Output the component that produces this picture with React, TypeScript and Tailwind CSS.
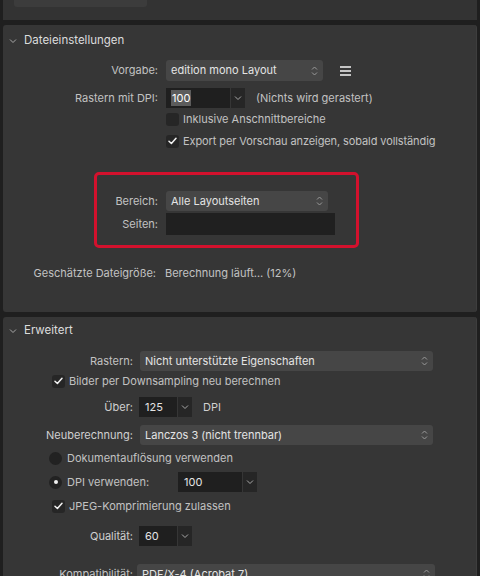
import React from 'react';

const font = { fontFamily: 'Inter, "Liberation Sans", sans-serif' };

function Chevron() {
  return (
    <svg width="8" height="6" viewBox="0 0 8 6" className="shrink-0">
      <path d="M1 1.5 L4 4.5 L7 1.5" fill="none" stroke="#a8a8a8" strokeWidth="1" />
    </svg>
  );
}

function Stepper() {
  return (
    <svg width="7" height="12" viewBox="0 0 7 12" className="shrink-0">
      <path d="M1 4.5 L3.5 2 L6 4.5 M1 7.5 L3.5 10 L6 7.5" fill="none" stroke="#9a9a9a" strokeWidth="1" />
    </svg>
  );
}

function Check() {
  return (
    <svg width="9" height="8" viewBox="0 0 9 8">
      <path d="M1 4.2 L3.4 6.5 L8 1.2" fill="none" stroke="#f2f2f2" strokeWidth="1.5" strokeLinecap="round" strokeLinejoin="round" />
    </svg>
  );
}

function Select({ value, w }: { value: string; w: string }) {
  return (
    <div className={`${w} h-full bg-[#464646] rounded-[3px] flex items-center justify-between pl-[5px] pr-[5px]`}>
      <span className="text-[#e4e4e4]">{value}</span>
      <Stepper />
    </div>
  );
}

function NumInput({ value, w, highlight }: { value: string; w: string; highlight?: boolean }) {
  return (
    <div className="flex h-full gap-[1px]">
      <div className={`${w} h-full bg-[#1f1f1f] flex items-center pl-[6px]`}>
        <span className={highlight ? 'bg-[#5c5c5c] text-white px-[1px] -ml-[1px]' : 'text-[#e4e4e4]'}>{value}</span>
      </div>
      <div className="w-[14px] h-full bg-[#262626] flex items-center justify-center">
        <Chevron />
      </div>
    </div>
  );
}

function CheckBox({ checked }: { checked?: boolean }) {
  return (
    <div className="w-[13px] h-[13px] rounded-[3px] bg-[#262626] flex items-center justify-center shrink-0">
      {checked && <Check />}
    </div>
  );
}

function Radio({ selected }: { selected?: boolean }) {
  return (
    <div className="w-[13px] h-[13px] rounded-full bg-[#222222] flex items-center justify-center shrink-0">
      {selected && <div className="w-[4px] h-[4px] rounded-full bg-[#f0f0f0]" />}
    </div>
  );
}

function Header({ title, h }: { title: string; h: string }) {
  return (
    <div className={`${h} flex items-center pl-[6px] gap-[7px]`}>
      <Chevron />
      <span className="text-[11.5px] text-[#dcdcdc]">{title}</span>
    </div>
  );
}

export default function App() {
  return (
    <div style={font} className="w-[480px] h-[576px] overflow-hidden bg-[#1f1f1f] text-[11px] text-[#c2c2c2] flex flex-col">
      {/* oberes Panel (abgeschnitten) */}
      <div className="h-[20px] ml-[3px] mr-[3px] bg-[#333333] shrink-0">
        <div className="ml-[11px] w-[133px] h-[7px] bg-[#3c3c3c] rounded-b-[3px]" />
      </div>

      {/* Dateieinstellungen */}
      <div className="mt-[5px] h-[287px] ml-[3px] mr-[3px] bg-[#363636] rounded-[3px] border-r border-[#3e3e3e] shrink-0 flex flex-col">
        <Header title="Dateieinstellungen" h="h-[32px]" />

        <div className="mt-[3px] h-[21px] flex items-center">
          <div className="w-[155px] text-right">Vorgabe:</div>
          <div className="ml-[8px] h-full flex items-center">
            <Select value="edition mono Layout" w="w-[157px]" />
            <div className="ml-[17px] flex flex-col gap-[2px]">
              <div className="w-[11px] h-[2px] bg-[#c4c4c4]" />
              <div className="w-[11px] h-[2px] bg-[#c4c4c4]" />
              <div className="w-[11px] h-[2px] bg-[#c4c4c4]" />
            </div>
          </div>
        </div>

        <div className="mt-[7px] h-[20px] flex items-center">
          <div className="w-[155px] text-right">Rastern mit DPI:</div>
          <div className="ml-[8px] h-full flex items-center">
            <NumInput value="100" w="w-[64px]" highlight />
            <span className="ml-[11px]">(Nichts wird gerastert)</span>
          </div>
        </div>

        <div className="mt-[4px] h-[14px] flex items-center pl-[163px] gap-[4px]">
          <CheckBox />
          <span>Inklusive Anschnittbereiche</span>
        </div>

        <div className="mt-[8px] h-[14px] flex items-center pl-[163px] gap-[4px]">
          <CheckBox checked />
          <span className="tracking-[-0.1px]">Export per Vorschau anzeigen, sobald vollständig</span>
        </div>

        {/* markierter Bereich */}
        <div className="mt-[24px] ml-[91px] w-[265px] h-[76px] border-[3px] border-[#d3112d] rounded-[5px] flex flex-col">
          <div className="mt-[16px] h-[20px] flex items-center">
            <div className="w-[61px] text-right">Bereich:</div>
            <div className="ml-[8px] h-full">
              <Select value="Alle Layoutseiten" w="w-[162px]" />
            </div>
          </div>
          <div className="mt-[2px] h-[22px] flex items-center">
            <div className="w-[61px] text-right">Seiten:</div>
            <div className="ml-[8px] h-full w-[169px] bg-[#202020]" />
          </div>
        </div>

        <div className="mt-[18px] h-[14px] flex items-center">
          <div className="w-[153px] text-right">Geschätzte Dateigröße:</div>
          <span className="ml-[9px]">Berechnung läuft… (12%)</span>
        </div>
      </div>

      {/* Erweitert */}
      <div className="mt-[5px] flex-1 ml-[3px] mr-[3px] bg-[#363636] rounded-t-[3px] border-r border-[#3e3e3e] flex flex-col">
        <Header title="Erweitert" h="h-[28px]" />

        <div className="mt-[6px] h-[20px] flex items-center">
          <div className="w-[130px] text-right">Rastern:</div>
          <div className="ml-[7px] h-full">
            <Select value="Nicht unterstützte Eigenschaften" w="w-[293px]" />
          </div>
        </div>

        <div className="mt-[3px] h-[14px] flex items-center pl-[49px] gap-[4px]">
          <CheckBox checked />
          <span>Bilder per Downsampling neu berechnen</span>
        </div>

        <div className="mt-[9px] h-[20px] flex items-center">
          <div className="w-[130px] text-right text-[#d0d0d0]">Über:</div>
          <div className="ml-[6px] h-full flex items-center">
            <NumInput value="125" w="w-[38px]" />
            <span className="ml-[11px] text-[#d0d0d0]">DPI</span>
          </div>
        </div>

        <div className="mt-[8px] h-[20px] flex items-center">
          <div className="w-[130px] text-right text-[#d0d0d0]">Neuberechnung:</div>
          <div className="ml-[7px] h-full">
            <Select value="Lanczos 3 (nicht trennbar)" w="w-[293px]" />
          </div>
        </div>

        <div className="mt-[6px] h-[14px] flex items-center pl-[46px] gap-[5px]">
          <Radio />
          <span>Dokumentauflösung verwenden</span>
        </div>

        <div className="mt-[7px] h-[20px] flex items-center pl-[46px]">
          <Radio selected />
          <span className="ml-[5px] w-[111px]">DPI verwenden:</span>
          <div className="h-full">
            <NumInput value="100" w="w-[64px]" />
          </div>
        </div>

        <div className="mt-[7px] h-[14px] flex items-center pl-[49px] gap-[4px]">
          <CheckBox checked />
          <span>JPEG-Komprimierung zulassen</span>
        </div>

        <div className="mt-[13px] h-[20px] flex items-center">
          <div className="w-[130px] text-right text-[#d0d0d0]">Qualität:</div>
          <div className="ml-[6px] h-full flex items-center">
            <NumInput value="60" w="w-[38px]" />
          </div>
        </div>

        <div className="mt-[18px] h-[20px] flex items-center">
          <div className="w-[130px] text-right">Kompatibilität:</div>
          <div className="ml-[4px] h-full">
            <Select value="PDF/X-4 (Acrobat 7)" w="w-[298px]" />
          </div>
        </div>
      </div>
    </div>
  );
}
